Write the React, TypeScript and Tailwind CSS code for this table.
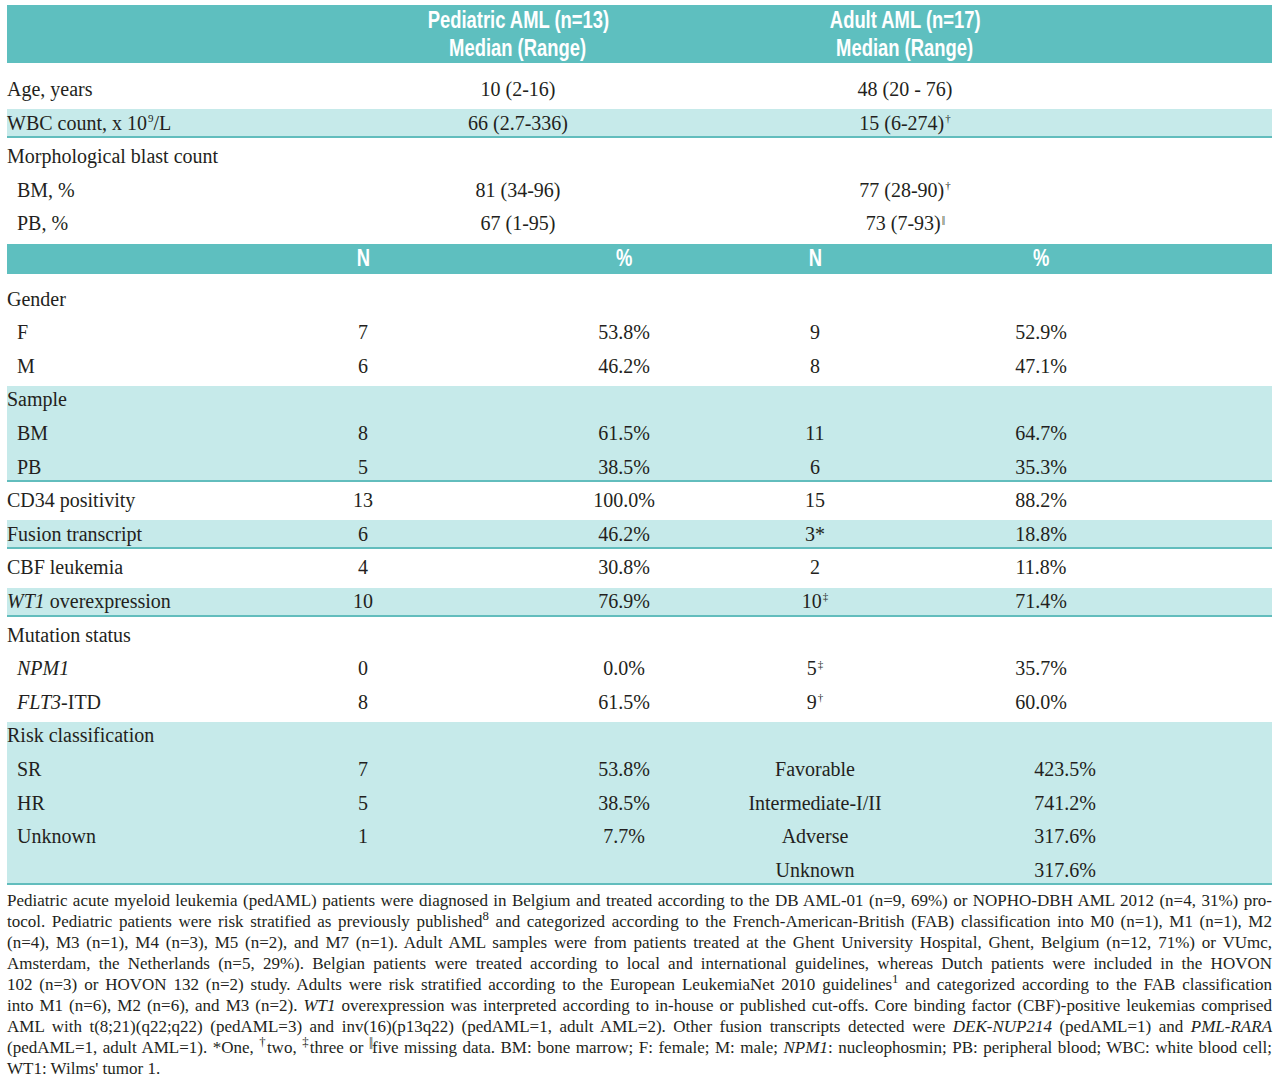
import React from 'react';

const TOP = 'grid grid-cols-[330px_362px_412px_1fr] h-[27px] items-center';
const BOT = 'grid grid-cols-[250px_212px_310px_72px_380px_1fr] h-[27px] items-center';
const CELL = 'flex justify-center whitespace-nowrap';
const HEAD_FONT = "font-['Liberation_Sans','Arial',sans-serif] font-bold text-white text-[23px]";

type Cells = React.ReactNode[];

const TopRow = ({ label, ped, adult, indent }: { label: React.ReactNode; ped?: React.ReactNode; adult?: React.ReactNode; indent?: boolean }) => (
  <div className={TOP}>
    <div className={indent ? 'pl-[10px] whitespace-nowrap' : 'whitespace-nowrap'}>{label}</div>
    <div className={CELL}><span>{ped}</span></div>
    <div className={CELL}><span>{adult}</span></div>
    <div />
  </div>
);

const Row = ({ label, cells, indent, shift }: { label: React.ReactNode; cells?: Cells; indent?: boolean; shift?: boolean }) => (
  <div className={BOT}>
    <div className={indent ? 'pl-[10px] whitespace-nowrap' : 'whitespace-nowrap'}>{label}</div>
    <div className={CELL}><span>{cells?.[0]}</span></div>
    <div className={CELL}><span>{cells?.[1]}</span></div>
    <div className={CELL}><span>{cells?.[2]}</span></div>
    <div className={shift ? 'flex justify-center whitespace-nowrap pl-[48px]' : CELL}><span>{cells?.[3]}</span></div>
    <div />
  </div>
);

const Sup = ({ children }: { children: React.ReactNode }) => (
  <sup className="text-[11px] top-[-0.7em] ml-[1px]">{children}</sup>
);

// double bar footnote mark
const Dbl = () => <span className="tracking-[-1px]">||</span>;

// condensed bold header text
const Cond = ({ children }: { children: React.ReactNode }) => (
  <span className="inline-block whitespace-nowrap scale-x-[0.8]">{children}</span>
);

const Line = ({ children, last }: { children: React.ReactNode; last?: boolean }) => (
  <div className={last ? 'whitespace-nowrap' : 'text-justify [text-align-last:justify]'}>{children}</div>
);

export default function App() {
  return (
    <div className="w-[1280px] min-h-[1084px] bg-white pt-[5px] pl-[7px] pr-[8px] text-[#231f20] font-['Liberation_Serif','Times_New_Roman',serif]">
      <div className="flex flex-col gap-[6.6px] text-[20px] leading-none">
        {/* main header */}
        <div className={`grid grid-cols-[330px_362px_412px_1fr] h-[58px] mb-[6px] bg-[#5ebfbf] items-center leading-[28px] ${HEAD_FONT}`}>
          <div />
          <div className="flex flex-col items-center">
            <Cond>Pediatric AML (n=13)</Cond>
            <Cond>Median (Range)</Cond>
          </div>
          <div className="flex flex-col items-center">
            <Cond>Adult AML (n=17)</Cond>
            <Cond>Median (Range)</Cond>
          </div>
          <div />
        </div>

        <TopRow label="Age, years" ped="10 (2-16)" adult="48 (20 - 76)" />
        <div className="bg-[#c6eaea] border-b-2 border-[#62bdbd] -mb-0.5">
          <TopRow
            label={<>WBC count, x 10<Sup>9</Sup>/L</>}
            ped="66 (2.7-336)"
            adult={<>15 (6-274)<Sup>†</Sup></>}
          />
        </div>
        <TopRow label="Morphological blast count" />
        <TopRow indent label="BM, %" ped="81 (34-96)" adult={<>77 (28-90)<Sup>†</Sup></>} />
        <TopRow indent label="PB, %" ped="67 (1-95)" adult={<>73 (7-93)<Sup><Dbl /></Sup></>} />

        {/* N / % header */}
        <div className={`grid grid-cols-[250px_212px_310px_72px_380px_1fr] h-[30px] mb-[5px] bg-[#5ebfbf] items-center ${HEAD_FONT}`}>
          <div />
          <div className={CELL}><Cond>N</Cond></div>
          <div className={CELL}><Cond>%</Cond></div>
          <div className={CELL}><Cond>N</Cond></div>
          <div className={CELL}><Cond>%</Cond></div>
          <div />
        </div>

        <Row label="Gender" />
        <Row indent label="F" cells={['7', '53.8%', '9', '52.9%']} />
        <Row indent label="M" cells={['6', '46.2%', '8', '47.1%']} />

        <div className="flex flex-col gap-[6.6px] bg-[#c6eaea] border-b-2 border-[#62bdbd] -mb-0.5">
          <Row label="Sample" />
          <Row indent label="BM" cells={['8', '61.5%', '11', '64.7%']} />
          <Row indent label="PB" cells={['5', '38.5%', '6', '35.3%']} />
        </div>

        <Row label="CD34 positivity" cells={['13', '100.0%', '15', '88.2%']} />
        <div className="bg-[#c6eaea] border-b-2 border-[#62bdbd] -mb-0.5">
          <Row label="Fusion transcript" cells={['6', '46.2%', '3*', '18.8%']} />
        </div>
        <Row label="CBF leukemia" cells={['4', '30.8%', '2', '11.8%']} />
        <div className="bg-[#c6eaea] border-b-2 border-[#62bdbd] -mb-0.5">
          <Row
            label={<><i>WT1</i> overexpression</>}
            cells={['10', '76.9%', <>10<Sup>‡</Sup></>, '71.4%']}
          />
        </div>

        <Row label="Mutation status" />
        <Row indent label={<i>NPM1</i>} cells={['0', '0.0%', <>5<Sup>‡</Sup></>, '35.7%']} />
        <Row indent label={<><i>FLT3</i>-ITD</>} cells={['8', '61.5%', <>9<Sup>†</Sup></>, '60.0%']} />

        <div className="flex flex-col gap-[6.6px] bg-[#c6eaea] border-b-2 border-[#62bdbd] -mb-0.5">
          <Row label="Risk classification" />
          <Row indent shift label="SR" cells={['7', '53.8%', 'Favorable', '423.5%']} />
          <Row indent shift label="HR" cells={['5', '38.5%', 'Intermediate-I/II', '741.2%']} />
          <Row indent shift label="Unknown" cells={['1', '7.7%', 'Adverse', '317.6%']} />
          <Row shift label="" cells={['', '', 'Unknown', '317.6%']} />
        </div>

        {/* footnote */}
        <div className="text-[17px] leading-[21px]">
          <Line>Pediatric acute myeloid leukemia (pedAML) patients were diagnosed in Belgium and treated according to the DB AML-01 (n=9, 69%) or NOPHO-DBH AML 2012 (n=4, 31%) pro-</Line>
          <Line>tocol. Pediatric patients were risk stratified as previously published<sup>8</sup> and categorized according to the French-American-British (FAB) classification into M0 (n=1), M1 (n=1), M2</Line>
          <Line>(n=4), M3 (n=1), M4 (n=3), M5 (n=2), and M7 (n=1). Adult AML samples were from patients treated at the Ghent University Hospital, Ghent, Belgium (n=12, 71%) or VUmc,</Line>
          <Line>Amsterdam, the Netherlands (n=5, 29%). Belgian patients were treated according to local and international guidelines, whereas Dutch patients were included in the HOVON</Line>
          <Line>102 (n=3) or HOVON 132 (n=2) study. Adults were risk stratified according to the European LeukemiaNet 2010 guidelines<sup>1</sup> and categorized according to the FAB classification</Line>
          <Line>into M1 (n=6), M2 (n=6), and M3 (n=2). <i>WT1</i> overexpression was interpreted according to in-house or published cut-offs. Core binding factor (CBF)-positive leukemias comprised</Line>
          <Line>AML with t(8;21)(q22;q22) (pedAML=3) and inv(16)(p13q22) (pedAML=1, adult AML=2). Other fusion transcripts detected were <i>DEK-NUP214</i> (pedAML=1) and <i>PML-RARA</i></Line>
          <Line>(pedAML=1, adult AML=1). *One, <sup>†</sup>two, <sup>‡</sup>three or <sup><Dbl /></sup>five missing data. BM: bone marrow; F: female; M: male; <i>NPM1</i>: nucleophosmin; PB: peripheral blood; WBC: white blood cell;</Line>
          <Line last>WT1: Wilms' tumor 1.</Line>
        </div>
      </div>
    </div>
  );
}
